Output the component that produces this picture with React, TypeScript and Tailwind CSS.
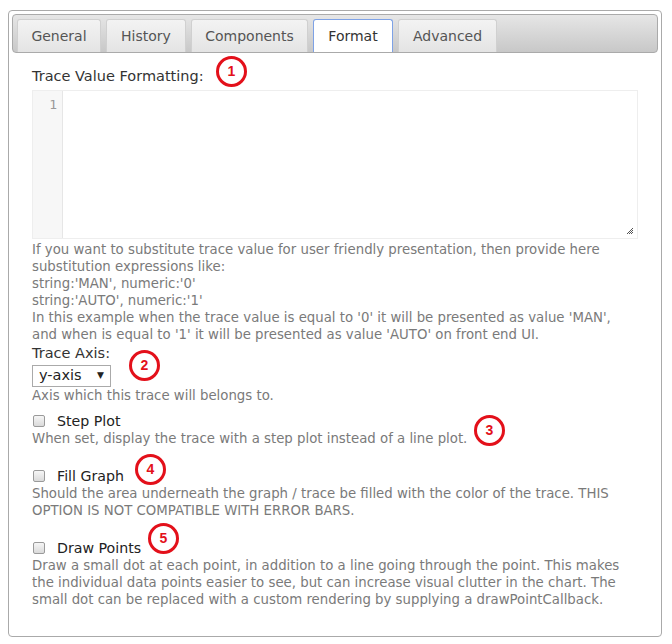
import React from "react";

const font = { fontFamily: '"DejaVu Sans", Verdana, sans-serif' };

function Badge({ n, className }: { n: number; className: string }) {
  return (
    <span
      className={`absolute flex h-[31px] w-[31px] items-center justify-center rounded-full border-[3px] border-[#e3101a] bg-white text-[14px] font-bold text-[#e3101a] ${className}`}
      style={{ fontFamily: '"Liberation Sans", Arial, sans-serif' }}
    >
      {n}
    </span>
  );
}

function Tab({ label, w, active }: { label: string; w: string; active?: boolean }) {
  return active ? (
    <div className={`flex h-[33px] items-center justify-center rounded-t-[3px] border border-b-0 border-[#7ea2e6] bg-white text-[14px] text-[#333] ${w}`}>
      {label}
    </div>
  ) : (
    <div className={`flex h-[33px] items-center justify-center rounded-t-[3px] border border-b-0 border-[#d0d0d0] bg-gradient-to-b from-[#f3f3f3] to-[#e4e4e4] text-[14px] text-[#555] ${w}`}>
      {label}
    </div>
  );
}

function Check({ label, top }: { label: string; top: string }) {
  return (
    <div className={`flex h-[18px] items-center ${top}`}>
      <span className="mr-[12px] ml-[1px] h-[12px] w-[12px] rounded-[2px] border border-[#9a9a9a] bg-gradient-to-b from-[#f6f6f6] to-[#dadada]" />
      <span className="text-[14.2px] leading-[18px] text-[#222]">{label}</span>
    </div>
  );
}

const help = "text-[13.3px] leading-[17px] text-[#7a7a7a]";

export default function App() {
  return (
    <div className="h-[644px] w-[672px] bg-white pt-[10px] pl-[8px]" style={font}>
      <div className="h-[627px] w-[654px] rounded-[4px] border border-[#aaa] bg-white p-[3px]">
        <div className="flex h-[39px] items-end rounded-[4px] border border-[#aaa] bg-gradient-to-b from-[#e6e6e6] to-[#c8c8c8] pl-[4px]">
          <Tab label="General" w="w-[84px]" />
          <div className="w-[5px]" />
          <Tab label="History" w="w-[80px]" />
          <div className="w-[5px]" />
          <Tab label="Components" w="w-[117px]" />
          <div className="w-[5px]" />
          <Tab label="Format" w="w-[80px]" active />
          <div className="w-[5px]" />
          <Tab label="Advanced" w="w-[99px]" />
        </div>
        <div className="relative pt-[13px] pl-[20px] pr-[16px]">
          <div className="text-[14.5px] leading-[20px] text-[#333]">Trace Value Formatting:</div>
          <Badge n={1} className="left-[204px] top-[3px]" />
          <div className="mt-[4px] flex h-[149px] w-[606px] border border-[#eee]">
            <div
              className="w-[30px] border-r border-[#e6e6e6] bg-[#f7f7f7] pt-[4px] pr-[5px] text-right text-[13px] text-[#999]"
              style={{ fontFamily: '"DejaVu Sans Mono", monospace' }}
            >
              1
            </div>
            <div className="relative flex-1">
              <svg className="absolute right-[3px] bottom-[3px]" width="8" height="8" viewBox="0 0 8 8">
                <path d="M7 1 L1 7 M7 3 L3 7 M7 5 L5 7" stroke="#555" strokeWidth="1" />
              </svg>
            </div>
          </div>
          <div className={`mt-[2px] ${help}`}>
            <div>If you want to substitute trace value for user friendly presentation, then provide here</div>
            <div>substitution expressions like:</div>
            <div>string:'MAN', numeric:'0'</div>
            <div>string:'AUTO', numeric:'1'</div>
            <div>In this example when the trace value is equal to '0' it will be presented as value 'MAN',</div>
            <div>and when is equal to '1' it will be presented as value 'AUTO' on front end UI.</div>
          </div>
          <div className="text-[14.5px] leading-[20px] text-[#333]">Trace Axis:</div>
          <Badge n={2} className="left-[117px] top-[297px]" />
          <div className="mt-[2px] flex h-[22px] w-[79px] items-center justify-between border border-[#aaa] pr-[6px] pl-[6px] text-[14.5px] text-[#222]">
            <span>y-axis</span>
            <span className="text-[9px]">▼</span>
          </div>
          <div className={help}>Axis which this trace will belongs to.</div>
          <Check label="Step Plot" top="mt-[8px]" />
          <div className={help}>When set, display the trace with a step plot instead of a line plot.</div>
          <Badge n={3} className="left-[462px] top-[362px]" />
          <Check label="Fill Graph" top="mt-[20px]" />
          <Badge n={4} className="left-[123px] top-[401px]" />
          <div className={help}>
            <div>Should the area underneath the graph / trace be filled with the color of the trace. THIS</div>
            <div>OPTION IS NOT COMPATIBLE WITH ERROR BARS.</div>
          </div>
          <Check label="Draw Points" top="mt-[20px]" />
          <Badge n={5} className="left-[136px] top-[470px]" />
          <div className={help}>
            <div>Draw a small dot at each point, in addition to a line going through the point. This makes</div>
            <div>the individual data points easier to see, but can increase visual clutter in the chart. The</div>
            <div>small dot can be replaced with a custom rendering by supplying a drawPointCallback.</div>
          </div>
        </div>
      </div>
    </div>
  );
}
